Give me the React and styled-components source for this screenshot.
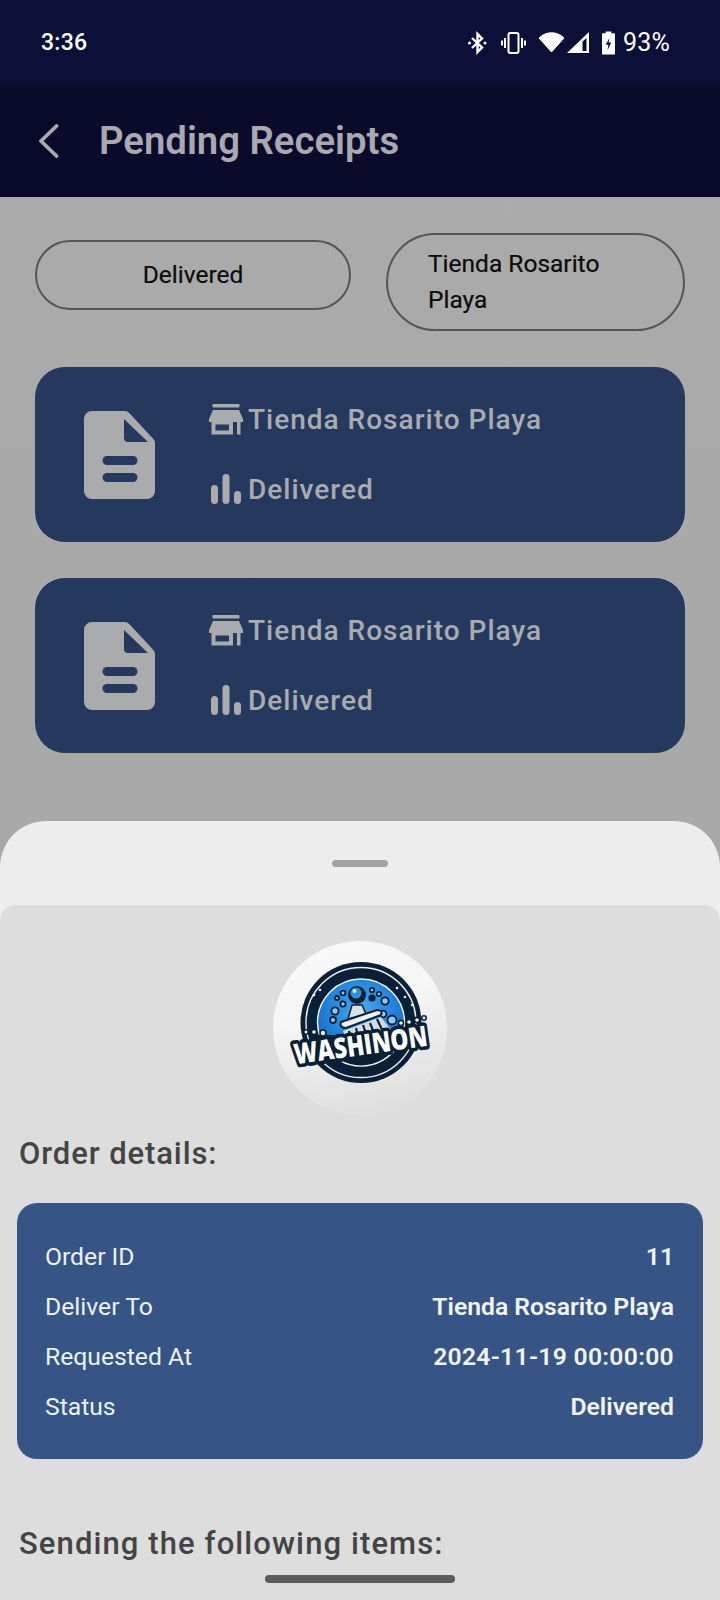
import React from "react";
import styled, { createGlobalStyle } from "styled-components";

const Global = createGlobalStyle`
  html, body { margin: 0; padding: 0; background: #aaaaaa; }
  body { width: 720px; height: 1600px; overflow: hidden; font-family: Roboto, "Liberation Sans", sans-serif; }
  * { box-sizing: border-box; }
`;

const Page = styled.div`
  width: 720px; height: 1600px; display: flex; flex-direction: column; overflow: hidden;
  background: linear-gradient(#ababab, #a6a6a6);
`;
const StatusBar = styled.div`
  height: 85px; background: #0c0f38; color: #fff; display: flex; align-items: center;
  justify-content: space-between; padding: 0 50px 0 41px;
`;
const Time = styled.span`font-size: 23px; font-weight: 500; letter-spacing: 0.3px;`;
const StatusIcons = styled.div`display: flex; align-items: center;`;
const Battery = styled.span`font-size: 25px; font-weight: 400; margin-left: 8px; letter-spacing: 0.2px;`;
const AppBar = styled.header`
  height: 112px; background: #0a0b2a; display: flex; align-items: center; padding: 0 0 0 38px; gap: 40px;
`;
const Title = styled.h1`
  margin: 0; font-size: 38.3px; font-weight: 600; color: #a9a9b0; letter-spacing: 0; line-height: 1;
`;
const Content = styled.main`
  height: 624px; padding: 36px 35px 0; display: flex; flex-direction: column; gap: 36px;
`;
const Filters = styled.div`
  display: grid; grid-template-columns: 316px 299px; column-gap: 35px; align-items: start; height: 98px;
`;
const Pill = styled.div`
  border: 2px solid #555; border-radius: 49px; font-size: 24.5px; font-weight: 400; color: #0b0b0b; line-height: 36px;
  -webkit-text-stroke: 0.2px #0b0b0b;
  min-height: ${(p) => (p.$tall ? 98 : 70)}px; display: flex; align-items: center;
  margin-top: ${(p) => (p.$tall ? 0 : 7)}px;
  justify-content: ${(p) => (p.$tall ? "flex-start" : "center")};
  padding: ${(p) => (p.$tall ? "0 70px 0 40px" : "0")};
`;
const Cards = styled.div`display: flex; flex-direction: column; gap: 36px;`;
const Card = styled.article`
  height: 175px; background: #25395e; border-radius: 30px; display: flex; align-items: center;
  padding-left: 49px; gap: 54px;
`;
const CardText = styled.div`display: flex; flex-direction: column; gap: 35px; margin-top: -1px;`;
const CardRow = styled.div`
  display: flex; align-items: center; gap: 5px; color: #aaabad; font-size: 28px; font-weight: 500;
  letter-spacing: 1px; line-height: 35px;
`;
const RowIconBox = styled.span`width: 34px; display: flex; justify-content: center;`;
const Sheet = styled.section`
  height: 779px; background: #ededed; border-radius: 46px 46px 0 0; display: flex; flex-direction: column;
  position: relative;
`;
const Grip = styled.div`height: 84px; display: flex; justify-content: center; padding-top: 39px;`;
const GripBar = styled.div`width: 56px; height: 7px; border-radius: 4px; background: #a3a3a3;`;
const Panel = styled.div`
  flex: 1; background: #dddddd; border-radius: 16px 16px 0 0; padding: 36px 17px 0;
  display: flex; flex-direction: column;
`;
const LogoCircle = styled.div`
  width: 174px; height: 174px; border-radius: 50%; align-self: center; display: flex; align-items: flex-start;
  justify-content: center; padding-top: 20px;
  background: linear-gradient(165deg, #f9f9f9 0%, #f5f5f5 40%, #e7e7e7 70%, #dddddd 95%);
`;
const Heading = styled.h2`
  margin: ${(p) => p.$top}px 0 0 2px; font-size: 31px; font-weight: 500; color: #444444; line-height: 36px; letter-spacing: ${(p) => p.$ls}px;
`;
const Details = styled.div`
  margin: 31px 0 0; background: #365486; border-radius: 20px; height: 256px; padding: 28px 29px 0 28px;
  display: flex; flex-direction: column;
`;
const DetailRow = styled.div`
  height: 50px; display: flex; align-items: center; justify-content: space-between; font-size: 24.7px; color: #eef1f6;
`;
const DetailValue = styled.span`font-weight: 600; letter-spacing: ${(p) => p.$ls || 0}px; color: #f2f4f8;`;
const HomeBar = styled.div`
  position: absolute; left: 265px; bottom: 17px; width: 190px; height: 8px; border-radius: 4px; background: #5c5c5c;
`;

const BackIcon = () => (
  <svg width="21" height="34" viewBox="0 0 21 34" fill="none" stroke="#a9a9b0" strokeWidth="3.8" strokeLinecap="round" strokeLinejoin="round">
    <path d="M18.5 2 L3 17 L18.5 32" />
  </svg>
);
const BluetoothIcon = () => (
  <svg width="19" height="24" viewBox="0 0 19 24" fill="none" stroke="#fff" strokeWidth="2.4" style={{ marginRight: 14 }}>
    <path d="M4 7 L14 16.5 L9.5 21 V3 L14 7.5 L4 17" />
    <circle cx="1.5" cy="12" r="1.5" fill="#fff" stroke="none" />
    <circle cx="17" cy="12" r="1.5" fill="#fff" stroke="none" />
  </svg>
);
const VibrateIcon = () => (
  <svg width="25" height="22" viewBox="0 0 25 22" fill="none" stroke="#fff" strokeWidth="2" style={{ marginRight: 12 }}>
    <rect x="7.5" y="1" width="10" height="20" rx="2" />
    <path d="M4 6 V16 M1 8.5 V13.5 M21 6 V16 M24 8.5 V13.5" />
  </svg>
);
const WifiIcon = () => (
  <svg width="27" height="21" viewBox="0 0 27 21" style={{ marginRight: 2 }}>
    <path d="M13.5 20 L1 6 C8 -1 19 -1 26 6 Z" fill="#fff" stroke="#fff" strokeLinejoin="round" />
  </svg>
);
const SignalIcon = () => (
  <svg width="22" height="21" viewBox="0 0 22 21" style={{ marginRight: 13 }}>
    <path d="M22 0 V21 H0 Z M19.5 6 L19.5 19 H15.5 V9.5 Z" fill="#fff" fillRule="evenodd" />
  </svg>
);
const BatteryIcon = () => (
  <svg width="13" height="24" viewBox="0 0 14 25">
    <path d="M4 0 H10 V2 H13 a1 1 0 0 1 1 1 V24 a1 1 0 0 1 -1 1 H1 a1 1 0 0 1 -1 -1 V3 a1 1 0 0 1 1 -1 H4 Z" fill="#fff" />
    <path d="M8 7 L4 14.5 H6.8 L6 20 L10 12 H7.2 Z" fill="#0c0f38" />
  </svg>
);
const DocIcon = () => (
  <svg width="71" height="88" viewBox="0 0 71 88" fill="#aaabad">
    <path fillRule="evenodd" d="M8 0 H41 a6 6 0 0 1 4 1.8 L68.5 27 a8 8 0 0 1 2.5 6 V80 a8 8 0 0 1 -8 8 H8 a8 8 0 0 1 -8 -8 V8 a8 8 0 0 1 8 -8 Z M40 8 L64 31 H44 a4 4 0 0 1 -4 -4 Z" />
    <rect x="18.5" y="45" width="35" height="9" rx="4.5" fill="#25395e" />
    <rect x="18.5" y="62" width="35" height="9" rx="4.5" fill="#25395e" />
  </svg>
);
const StoreIcon = () => (
  <svg width="34" height="31" viewBox="0 0 34 31" fill="#aaabad">
    <rect x="3.5" y="0" width="27" height="3.5" rx="0.8" />
    <path d="M4 6 H30 L34 15 V18 H0 V15 Z" />
    <path fillRule="evenodd" d="M2.5 18 H24 V30.5 H2.5 Z M6.5 20.5 V26.5 H20 V20.5 Z" />
    <rect x="28" y="18" width="3.5" height="12.5" />
  </svg>
);
const BarsIcon = () => (
  <svg width="30" height="30" viewBox="0 0 30 30" fill="#aaabad">
    <rect x="0" y="11" width="7" height="19" rx="3.5" />
    <rect x="11.5" y="0" width="7" height="30" rx="3.5" />
    <rect x="23" y="17" width="7" height="13" rx="3.5" />
  </svg>
);

const bubbles = [
  [70, 32, 2.4], [64, 37, 2], [70, 43, 2.6], [62, 50, 3.6], [60, 59, 3],
  [99, 29, 2.2], [106, 33, 2.2], [112, 40, 3.6], [110, 53, 3.4], [119, 59, 4.5],
];
const foam = [[128, 62, 2.6], [136, 61, 2.6], [144, 59, 2.6], [151, 57, 2.2], [33, 71, 2.2], [41, 71, 2.6], [50, 72, 3]];
const specks = [[124, 27], [132, 36], [47, 29], [41, 34], [139, 44]];

const Logo = () => (
  <svg width="174" height="134" viewBox="0 0 174 134">
    <defs>
      <radialGradient id="blue" cx="50%" cy="35%" r="65%">
        <stop offset="0%" stopColor="#4aa8ee" />
        <stop offset="65%" stopColor="#1c7fd8" />
        <stop offset="100%" stopColor="#1060b0" />
      </radialGradient>
    </defs>
    <circle cx="88" cy="61.5" r="60.5" fill="#0b2036" />
    <circle cx="88" cy="61.5" r="55" fill="none" stroke="#e8eef4" strokeWidth="1.4" />
    <circle cx="88" cy="61.5" r="43.5" fill="url(#blue)" stroke="#f2f6fa" strokeWidth="1.4" />
    <path d="M45 74 a43.5 43.5 0 0 0 86 0 Z" fill="#0b2036" />
    <path d="M52 86 a43.5 43.5 0 0 0 72 0" fill="none" stroke="#f2f6fa" strokeWidth="1.4" />
    {specks.map(([x, y]) => <circle key={`${x}-${y}`} cx={x} cy={y} r="1.3" fill="#e8eef4" />)}
    {bubbles.map(([x, y, r]) => (
      <circle key={`${x}-${y}`} cx={x} cy={y} r={r} fill="#8cc8f2" stroke="#0b2036" strokeWidth="1.8" />
    ))}
    <circle cx="99" cy="37" r="3.6" fill="#0b2036" />
    <path d="M79 44 H89 L93 53 L75 58 Z" fill="#d9e1e8" stroke="#0b2036" strokeWidth="1.5" />
    <circle cx="84" cy="34" r="9" fill="#0b2036" />
    <circle cx="83" cy="32" r="5.5" fill="#2f8fdc" />
    <circle cx="81.5" cy="30" r="2" fill="#d8eefc" />
    <path d="M70 70 L108 56 L122 74 L76 84 Z" fill="#d3dce4" />
    <path d="M76 70 L78 82 M83 67 L86 80 M90 64 L95 78 M97 62 L103 77 M104 58 L112 75" stroke="#0b2036" strokeWidth="2.2" />
    <path d="M68 61 L104 49 Q110 49 108 54 L73 67 Q66 67 68 61 Z" fill="#eceff3" stroke="#0b2036" strokeWidth="2" />
    {foam.map(([x, y, r]) => (
      <circle key={`${x}-${y}`} cx={x} cy={y} r={r} fill="#f4f7fa" stroke="#0b2036" strokeWidth="1.6" />
    ))}
    <g transform="translate(89 94) rotate(-8) scale(0.84 1.05)">
      <text x="0" y="0" textAnchor="middle" fontFamily="'Open Sans', sans-serif" fontWeight="800" fontSize="27" fill="#0b2036" stroke="#0b2036" strokeWidth="7" strokeLinejoin="round">WASHINON</text>
      <text x="0" y="0" textAnchor="middle" fontFamily="'Open Sans', sans-serif" fontWeight="800" fontSize="27" fill="#ffffff">WASHINON</text>
    </g>
  </svg>
);

const rows = [
  ["Order ID", "11", 0],
  ["Deliver To", "Tienda Rosarito Playa", 0],
  ["Requested At", "2024-11-19 00:00:00", 0.3],
  ["Status", "Delivered", 0],
];

export default function App() {
  return (
    <Page>
      <Global />
      <StatusBar>
        <Time>3:36</Time>
        <StatusIcons>
          <BluetoothIcon />
          <VibrateIcon />
          <WifiIcon />
          <SignalIcon />
          <BatteryIcon />
          <Battery>93%</Battery>
        </StatusIcons>
      </StatusBar>
      <AppBar>
        <BackIcon />
        <Title>Pending Receipts</Title>
      </AppBar>
      <Content>
        <Filters>
          <Pill>Delivered</Pill>
          <Pill $tall>Tienda Rosarito Playa</Pill>
        </Filters>
        <Cards>
          {[0, 1].map((i) => (
            <Card key={i}>
              <DocIcon />
              <CardText>
                <CardRow><RowIconBox><StoreIcon /></RowIconBox>Tienda Rosarito Playa</CardRow>
                <CardRow><RowIconBox><BarsIcon /></RowIconBox>Delivered</CardRow>
              </CardText>
            </Card>
          ))}
        </Cards>
      </Content>
      <Sheet>
        <Grip><GripBar /></Grip>
        <Panel>
          <LogoCircle><Logo /></LogoCircle>
          <Heading $top={21} $ls={0.9}>Order details:</Heading>
          <Details>
            {rows.map(([k, v, ls]) => (
              <DetailRow key={k}><span>{k}</span><DetailValue $ls={ls}>{v}</DetailValue></DetailRow>
            ))}
          </Details>
          <Heading $top={67} $ls={1.1}>Sending the following items:</Heading>
        </Panel>
        <HomeBar />
      </Sheet>
    </Page>
  );
}
